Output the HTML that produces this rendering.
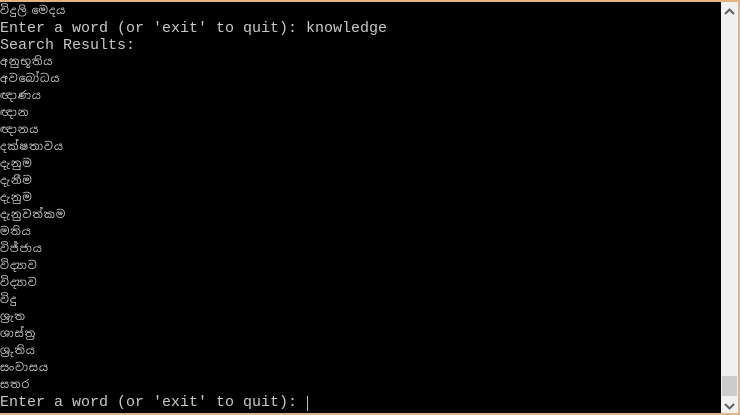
<!DOCTYPE html>
<html><head><meta charset="utf-8"><style>
html,body{margin:0;padding:0;width:740px;height:415px;overflow:hidden;background:#000}
.win{position:absolute;left:0;top:0;width:740px;height:415px;background:#000;box-sizing:border-box;border-top:2px solid #e3b382;border-bottom:2px solid #e3b382;border-right:2px solid #e3b382}
.txt{position:absolute;left:0;top:1px;color:#c8c8c8;font-family:"Liberation Mono",monospace;font-size:15px;line-height:17px;white-space:pre}
.s{font-size:11px;letter-spacing:1px;font-family:"Liberation Sans","Noto Sans Sinhala","DejaVu Sans",sans-serif;display:block;height:17px}
.sb{position:absolute;left:721px;top:0;width:17px;height:411px;background:#f0f0f0}
.th{position:absolute;left:1px;top:374px;width:15px;height:20px;background:#cdcdcd}
.cur{position:absolute;left:307px;top:394px;width:1px;height:15px;background:#c0c0c0}
</style></head><body><div class="win">
<div class="txt"><span class="s">විදුලි මෙදය</span>Enter a word (or 'exit' to quit): knowledge
Search Results:
<span class="s">අනුභූතිය</span><span class="s">අවබෝධය</span><span class="s">ඥාණය</span><span class="s">ඥාන</span><span class="s">ඥානය</span><span class="s">දක්ෂතාවය</span><span class="s">දැනුම</span><span class="s">දැනීම</span><span class="s">දැනුම</span><span class="s">දැනුවත්කම</span><span class="s">මතිය</span><span class="s">විජ්ජාය</span><span class="s">විද්‍යාව</span><span class="s">විද්‍යාව</span><span class="s">විදු</span><span class="s">ශ්‍රැත</span><span class="s">ශාස්ත්‍ර</span><span class="s">ශ්‍රුතිය</span><span class="s">සංවාසය</span><span class="s">සතර</span>Enter a word (or 'exit' to quit): </div>
<div class="cur"></div>
<div class="sb">
<svg style="position:absolute;left:3px;top:6px" width="11" height="8"><path d="M1 6 L5.5 1.5 L10 6" stroke="#606060" stroke-width="2" fill="none"/></svg>
<div class="th"></div>
<svg style="position:absolute;left:3px;top:400px" width="11" height="8"><path d="M1 2 L5.5 6.5 L10 2" stroke="#606060" stroke-width="2" fill="none"/></svg>
</div>
</div></body></html>
